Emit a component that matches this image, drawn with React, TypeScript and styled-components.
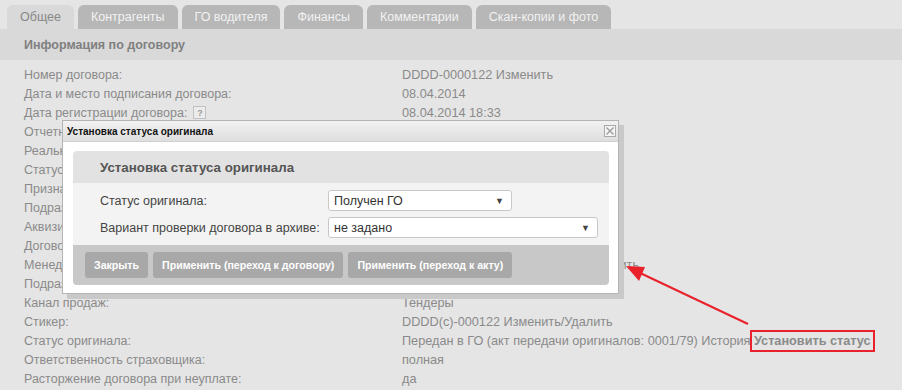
import React from "react";
import styled, { createGlobalStyle } from "styled-components";

const GlobalStyle = createGlobalStyle`
  html, body {
    margin: 0;
    padding: 0;
    background: #e5e5e5;
  }
  body {
    font-family: "Liberation Sans", Arial, sans-serif;
  }
`;

const Page = styled.div`
  position: relative;
  width: 902px;
  height: 390px;
  overflow: hidden;
  background: #e5e5e5;
  font-size: 12.5px;
  color: #8a8a8a;
`;

const TabBar = styled.div`
  display: flex;
  gap: 4px;
  height: 29px;
  padding: 5px 0 0 7px;
  box-sizing: border-box;
`;

const Tab = styled.div<{ active?: boolean }>`
  display: flex;
  align-items: center;
  height: 24px;
  padding: 0 13px;
  border-radius: 6px 6px 0 0;
  background: ${({ active }) => (active ? "#d9d9d9" : "#b7b7b7")};
  color: ${({ active }) => (active ? "#888" : "#f2f2f2")};
  white-space: nowrap;
`;

const SectionHeader = styled.div`
  display: flex;
  align-items: center;
  height: 31px;
  padding-left: 24px;
  background: #d9d9d9;
  font-weight: bold;
  color: #808080;
`;

const InfoList = styled.div`
  display: grid;
  grid-template-columns: 378px 1fr;
  grid-auto-rows: 19px;
  align-items: center;
  padding: 5px 0 0 24px;
`;

const Label = styled.div`
  white-space: nowrap;
  display: flex;
  align-items: center;
  gap: 6px;
`;

const Value = styled.div`
  white-space: nowrap;
  font-size: 12.7px;
`;

const HelpIcon = styled.span`
  display: inline-flex;
  align-items: center;
  justify-content: center;
  width: 11px;
  height: 11px;
  border: 1px solid #c2c2c2;
  background: #ececec;
  font-size: 9px;
  font-weight: bold;
  color: #999;
`;

const StatusLink = styled.span`
  font-weight: bold;
  outline: 2px solid #e8212b;
  outline-offset: 2px;
`;

const Dialog = styled.div`
  position: absolute;
  left: 62px;
  top: 120px;
  width: 557px;
  height: 174px;
  box-sizing: border-box;
  background: #fff;
  border: 1px solid #b4b4b4;
  box-shadow: 5px 5px 0 #c9c9c9;
  display: flex;
  flex-direction: column;
`;

const DialogTitleBar = styled.div`
  display: flex;
  align-items: center;
  justify-content: space-between;
  height: 20px;
  padding: 0 2px 0 4px;
  background: linear-gradient(#f2f2f2, #dedede);
  border-bottom: 1px solid #d0d0d0;
  font-size: 10px;
  font-weight: bold;
  color: #111;
`;

const CloseBox = styled.span`
  display: flex;
  width: 12px;
  height: 12px;
  box-sizing: border-box;
  border: 1px solid #aaa;
  background: #f4f4f4;
  svg {
    width: 10px;
    height: 10px;
  }
`;

const DialogBody = styled.div`
  flex: 1;
  padding: 9px 9px 8px 10px;
  display: flex;
`;

const Panel = styled.div`
  flex: 1;
  display: flex;
  flex-direction: column;
  border-radius: 4px;
  overflow: hidden;
`;

const PanelHeader = styled.div`
  display: flex;
  align-items: center;
  height: 32px;
  padding-left: 27px;
  background: #e2e2e2;
  font-size: 13.3px;
  font-weight: bold;
  color: #555;
`;

const PanelForm = styled.div`
  display: grid;
  grid-template-columns: 228px 1fr;
  row-gap: 6px;
  align-items: center;
  padding: 7px 0 7px 27px;
  background: #f3f3f3;
  color: #444;
  white-space: nowrap;
`;

const Select = styled.div<{ width: number }>`
  display: flex;
  align-items: center;
  justify-content: space-between;
  width: ${({ width }) => width}px;
  height: 21px;
  box-sizing: border-box;
  padding: 0 7px 0 5px;
  background: #fff;
  border: 1px solid #c8c8c8;
  border-radius: 3px;
  color: #333;
`;

const Caret = styled.span`
  font-size: 9px;
  color: #444;
`;

const PanelFooter = styled.div`
  flex: 1;
  display: flex;
  align-items: center;
  gap: 5px;
  padding: 0 12px;
  background: #c8c8c8;
`;

const Button = styled.button`
  height: 26px;
  padding: 0 9px;
  border: none;
  border-radius: 3px;
  background: #a8a8a8;
  color: #fff;
  font-family: "Liberation Sans", Arial, sans-serif;
  font-size: 10.6px;
  font-weight: bold;
  white-space: nowrap;
`;

const Annotation = styled.svg`
  position: absolute;
  left: 0;
  top: 0;
  pointer-events: none;
`;

const tabs = ["Общее", "Контрагенты", "ГО водителя", "Финансы", "Комментарии", "Скан-копии и фото"];

type Row = { label: React.ReactNode; value: React.ReactNode };

const rows: Row[] = [
  { label: "Номер договора:", value: "DDDD-0000122 Изменить" },
  { label: "Дата и место подписания договора:", value: "08.04.2014" },
  {
    label: (
      <>
        Дата регистрации договора: <HelpIcon>?</HelpIcon>
      </>
    ),
    value: "08.04.2014 18:33",
  },
  { label: "Отчетный период:", value: "04.2014" },
  { label: "Реальная дата начала:", value: "08.04.2014" },
  { label: "Статус договора:", value: "Действует" },
  { label: "Признак пролонгации:", value: "нет" },
  { label: "Подразделение:", value: "Центральный офис" },
  { label: "Аквизиция:", value: "нет" },
  { label: "Договор заключен:", value: "в офисе" },
  { label: "Менеджер:", value: "Сидоров Алексей Викторович Изменить" },
  { label: "Подразделение менеджера:", value: "Центральный офис" },
  { label: "Канал продаж:", value: "Тендеры" },
  { label: "Стикер:", value: "DDDD(c)-000122 Изменить/Удалить" },
  {
    label: "Статус оригинала:",
    value: (
      <>
        Передан в ГО (акт передачи оригиналов: 0001/79) История <StatusLink>Установить статус</StatusLink>
      </>
    ),
  },
  { label: "Ответственность страховщика:", value: "полная" },
  { label: "Расторжение договора при неуплате:", value: "да" },
];

export default function App() {
  return (
    <Page>
      <GlobalStyle />
      <TabBar>
        {tabs.map((t, i) => (
          <Tab key={t} active={i === 0}>
            {t}
          </Tab>
        ))}
      </TabBar>
      <SectionHeader>Информация по договору</SectionHeader>
      <InfoList>
        {rows.map((r, i) => (
          <React.Fragment key={i}>
            <Label>{r.label}</Label>
            <Value>{r.value}</Value>
          </React.Fragment>
        ))}
      </InfoList>

      <Dialog>
        <DialogTitleBar>
          <span>Установка статуса оригинала</span>
          <CloseBox>
            <svg viewBox="0 0 10 10">
              <path d="M1.5 1.5 L8.5 8.5 M8.5 1.5 L1.5 8.5" stroke="#999" strokeWidth="1.2" />
            </svg>
          </CloseBox>
        </DialogTitleBar>
        <DialogBody>
          <Panel>
            <PanelHeader>Установка статуса оригинала</PanelHeader>
            <PanelForm>
              <span>Статус оригинала:</span>
              <Select width={184}>
                Получен ГО <Caret>▼</Caret>
              </Select>
              <span>Вариант проверки договора в архиве:</span>
              <Select width={270}>
                не задано <Caret>▼</Caret>
              </Select>
            </PanelForm>
            <PanelFooter>
              <Button>Закрыть</Button>
              <Button>Применить (переход к договору)</Button>
              <Button>Применить (переход к акту)</Button>
            </PanelFooter>
          </Panel>
        </DialogBody>
      </Dialog>

      <Annotation width="902" height="390" viewBox="0 0 902 390">
        <line x1="748" y1="324" x2="638" y2="272" stroke="#e8212b" strokeWidth="2" />
        <polygon points="626,266 645,267 639,281" fill="#e8212b" />
      </Annotation>
    </Page>
  );
}
